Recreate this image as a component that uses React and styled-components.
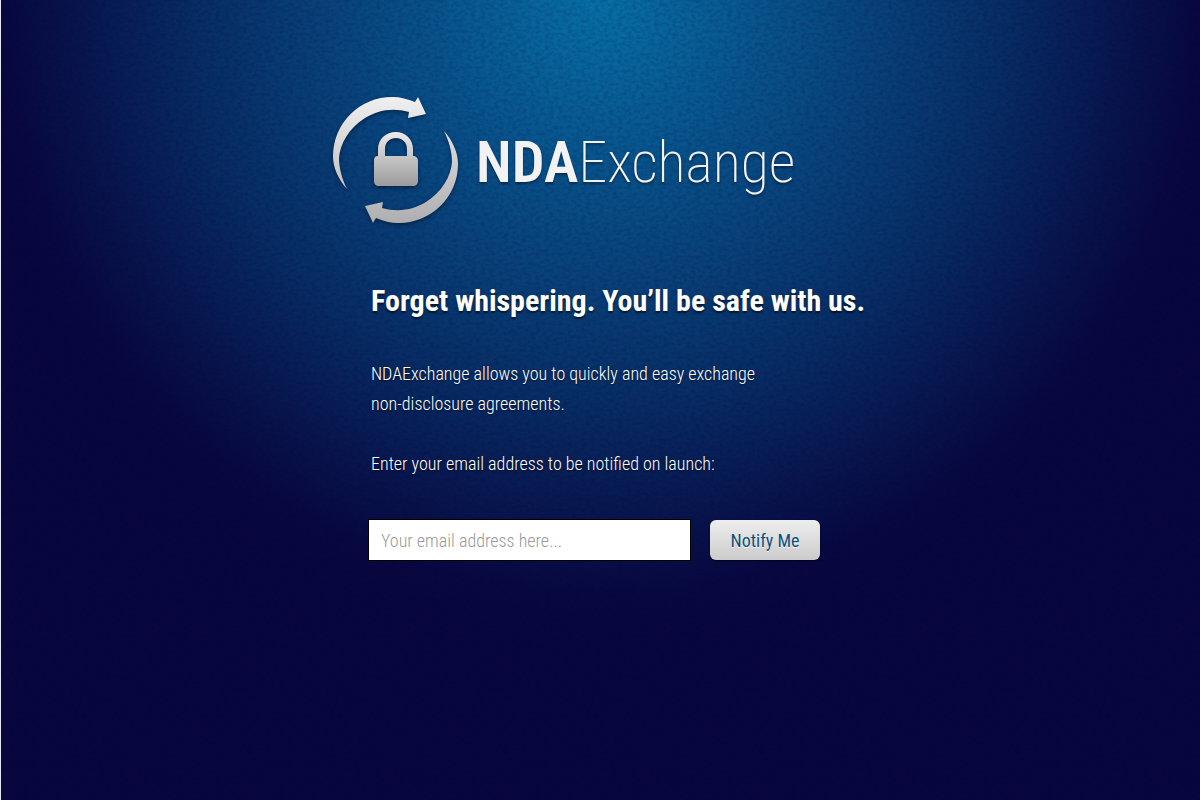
import React from "react";
import styled, { createGlobalStyle } from "styled-components";

const grain = encodeURIComponent(
  `<svg xmlns="http://www.w3.org/2000/svg" width="256" height="256"><filter id="n" x="0" y="0" width="100%" height="100%"><feTurbulence type="fractalNoise" baseFrequency="0.22 0.3" numOctaves="3" seed="8" stitchTiles="stitch"/><feColorMatrix values="0 0 0 0 0  0 0 0 0 0  0 0 0 0 0.04  1.2 0 0 0 -0.42"/></filter><rect width="256" height="256" filter="url(#n)" opacity="0.3"/></svg>`
);

const narrow = `"Roboto Condensed", "Liberation Sans Narrow", "Liberation Sans", sans-serif`;

const GlobalStyle = createGlobalStyle`
  *, *::before, *::after { box-sizing: border-box; }
  body {
    margin: 0;
    background: #07053a;
    color: #fff;
    font-family: ${narrow};
  }
`;

const Page = styled.div`
  min-height: 100vh;
  padding: 96px 24px 48px;
  border-left: 1px solid #e4e6ee;
  background:
    url("data:image/svg+xml,${grain}"),
    radial-gradient(circle 630px at 50% 0, #0670a5 0%, #07669c 10%, #085289 28%, #083f76 47%, #072c63 65%, #08164d 82%, #080740 95%, #08063d 100%);
`;

const Content = styled.main`
  max-width: 535px;
  margin: 0 auto;
`;

const Brand = styled.header`
  display: flex;
  align-items: center;
  gap: 15px;
`;

const Mark = styled.svg`
  flex: none;
  width: 128px;
  height: 132px;
  filter: drop-shadow(0 2px 2px rgba(0, 0, 0, 0.4));
`;

const Wordmark = styled.div`
  display: flex;
  align-items: baseline;
  font-size: 58px;
  line-height: 80px;
  color: #f2f2f3;
  filter: drop-shadow(0 2px 1px rgba(0, 0, 0, 0.4));
`;

const WordStrong = styled.span`
  font-weight: 600;
`;

const WordLight = styled.span`
  font-weight: 200;
`;

const Body = styled.div`
  padding: 48px 0 0 35px;
`;

const Copy = styled.div`
  padding-left: 3px;
`;

const Heading = styled.h1`
  margin: 0 0 33px;
  font-size: 30px;
  font-weight: 700;
  line-height: 50px;
  white-space: nowrap;
  text-shadow: 0 2px 2px rgba(0, 0, 0, 0.6);
`;

const Text = styled.p`
  display: block;
  margin: 0 0 30px;
  max-width: 400px;
  font-size: 18px;
  font-weight: 300;
  line-height: 30px;
  text-shadow: 0 1px 2px rgba(0, 0, 0, 0.6);
`;

const Form = styled.form`
  display: flex;
  align-items: center;
  gap: 19px;
  padding-top: 10px;
`;

const EmailInput = styled.input`
  width: 323px;
  height: 42px;
  padding: 0 12px;
  border: 1px solid #000;
  border-radius: 0;
  background: #fff;
  color: #333;
  font: 300 18px ${narrow};
  &::placeholder { color: #999; opacity: 1; }
`;

const SubmitButton = styled.button`
  width: 110px;
  height: 40px;
  padding: 0;
  border: 0;
  border-radius: 6px;
  background: linear-gradient(#eeeeef, #cbcbcc);
  box-shadow: 0 1px 2px rgba(0, 0, 0, 0.7);
  color: #0a4f78;
  font: 18px ${narrow};
  text-shadow: 0 1px 0 #fff;
  cursor: pointer;
`;

function ExchangeMark() {
  return (
    <Mark viewBox="0 0 128 132" aria-hidden="true">
      <defs>
        <linearGradient id="metal" gradientUnits="userSpaceOnUse" x1="0" y1="0" x2="0" y2="130">
          <stop offset="0" stopColor="#f0f0f1" />
          <stop offset="1" stopColor="#adadaf" />
        </linearGradient>
        <linearGradient id="lock" gradientUnits="userSpaceOnUse" x1="0" y1="36" x2="0" y2="90">
          <stop offset="0" stopColor="#ebebec" />
          <stop offset="1" stopColor="#9b9b9d" />
        </linearGradient>
      </defs>
      <g fill="url(#metal)">
        <path d="M14 93 C5 83 0 71 0 60 A59 59 0 0 1 60 1 C67 1 75 3 82 6 L85 1 L93 18 L75 22 L76 16 C58 11 44 15 32 22 C16 32 7 48 6 62 C6 72 9 83 14 93 Z" />
        <path d="M111 35 C120 45 125 57 125 68 A59 59 0 0 1 65 127 C58 127 50 125 43 122 L40 127 L32 110 L50 106 L49 112 C67 117 81 113 93 106 C109 96 118 80 119 66 C119 56 116 45 111 35 Z" />
      </g>
      <path
        fill="url(#lock)"
        fillRule="evenodd"
        d="M45 60 V53 C45 43 53 36 63 36 C72 36 80 43 80 53 V60 C83 60 85 62 85 65 V85 C85 88 83 90 80 90 H46 C43 90 41 88 41 85 V65 C41 62 42 60 45 60 Z M52 60 H74 V53 C74 46 69 42 63 42 C57 42 52 46 52 53 Z"
      />
    </Mark>
  );
}

export default function App() {
  return (
    <>
      <GlobalStyle />
      <Page>
        <Content>
          <Brand>
            <ExchangeMark />
            <Wordmark>
              <WordStrong>NDA</WordStrong>
              <WordLight>Exchange</WordLight>
            </Wordmark>
          </Brand>
          <Body>
            <Copy>
              <Heading>Forget whispering. You’ll be safe with us.</Heading>
              <Text>
                NDAExchange allows you to quickly and easy exchange
                <br />
                non-disclosure agreements.
              </Text>
              <Text as="label" htmlFor="email">
                Enter your email address to be notified on launch:
              </Text>
            </Copy>
            <Form onSubmit={(event) => event.preventDefault()}>
              <EmailInput id="email" type="email" placeholder="Your email address here..." />
              <SubmitButton type="submit">Notify Me</SubmitButton>
            </Form>
          </Body>
        </Content>
      </Page>
    </>
  );
}
